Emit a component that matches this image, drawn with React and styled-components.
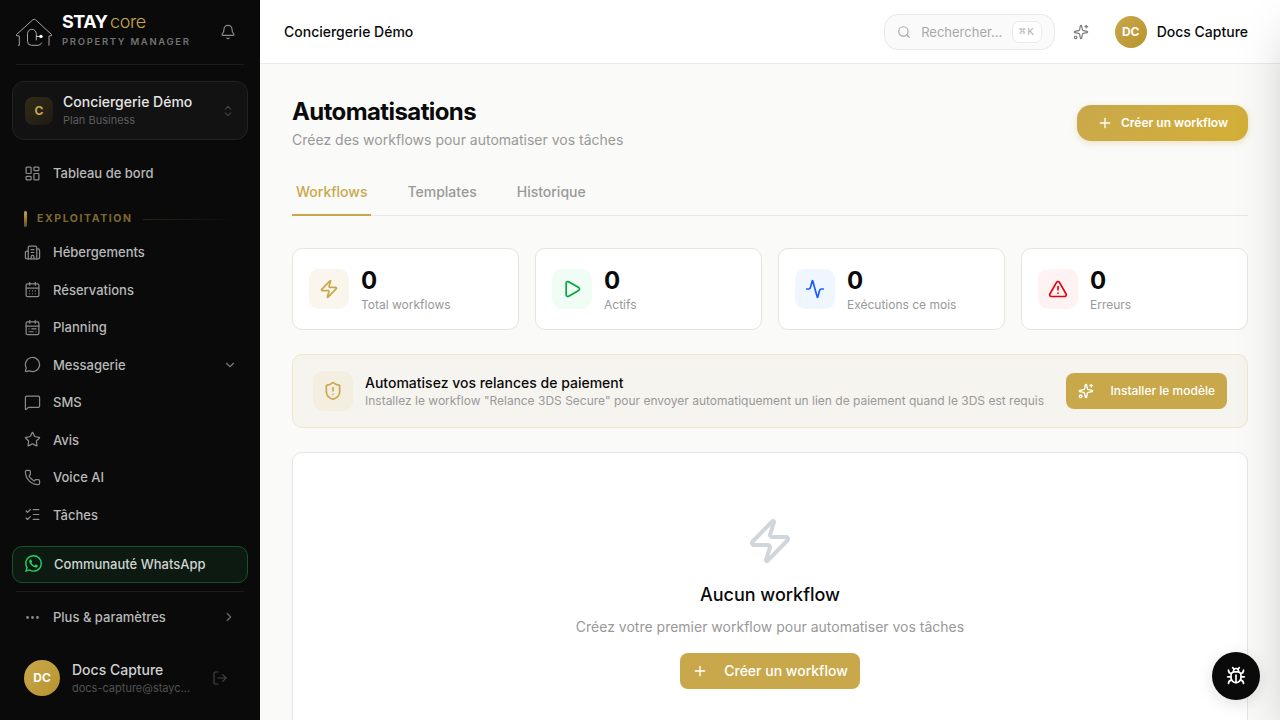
import React from 'react'
import { useState } from 'react'
import styled, { createGlobalStyle } from 'styled-components'
import {
  Activity,
  Bell,
  Bug,
  Building2,
  CalendarDays,
  CalendarRange,
  ChevronDown,
  ChevronRight,
  ChevronsUpDown,
  Ellipsis,
  LayoutDashboard,
  ListChecks,
  LogOut,
  MessageCircle,
  MessageSquare,
  Phone,
  Play,
  Plus,
  Search,
  ShieldAlert,
  Sparkles,
  Star,
  TriangleAlert,
  Zap,
} from 'lucide-react'
import { SiWhatsapp } from 'react-icons/si'

const navItems = [
  { label: 'Hébergements', icon: Building2 },
  { label: 'Réservations', icon: CalendarDays },
  { label: 'Planning', icon: CalendarRange },
  { label: 'Messagerie', icon: MessageCircle, open: true },
  { label: 'SMS', icon: MessageSquare },
  { label: 'Avis', icon: Star },
  { label: 'Voice AI', icon: Phone },
  { label: 'Tâches', icon: ListChecks },
]

const stats = [
  { label: 'Total workflows', value: 0, icon: Zap, color: '#c9a84c', bg: '#faf6ed' },
  { label: 'Actifs', value: 0, icon: Play, color: '#00a63e', bg: '#f0fdf4' },
  { label: 'Exécutions ce mois', value: 0, icon: Activity, color: '#155dfc', bg: '#eff6ff' },
  { label: 'Erreurs', value: 0, icon: TriangleAlert, color: '#e7000b', bg: '#fef2f2' },
]

const tabs = ['Workflows', 'Templates', 'Historique']

function Logo() {
  return (
    <svg width="36" height="28" viewBox="0 0 36 28" fill="none" stroke="#a3a3a3" strokeWidth="1" strokeLinecap="round">
      <path d="M2.500 27.300H3.300V18L.5 17.700V16.500L16.800 1.800Q18.200 .7 19.600 1.800L35.500 16.500V17.700L33 18V27.300" />
      <path d="M20.300 22V15.700a4.400 4.400 0 0 0-8.800 0v7.600a4 4 0 0 0 4 4h6.500q2.700 0 3.500-2.300" />
      <path d="M20.500 18.400h4" stroke="#d4d4d4" />
      <circle cx="25" cy="18.400" r="1.700" fill="#fff" stroke="none" />
    </svg>
  )
}

function Sidebar() {
  return (
    <Side>
      <Brand>
        <Logo />
        <BrandText>
          <BrandName>STAY<span>core</span></BrandName>
          <BrandSub>PROPERTY MANAGER</BrandSub>
        </BrandText>
        <Bell size={16} strokeWidth={1.75} />
      </Brand>

      <Workspace>
        <WorkspaceIcon>C</WorkspaceIcon>
        <WorkspaceText>
          <WorkspaceName>Conciergerie Démo</WorkspaceName>
          <WorkspacePlan>Plan Business</WorkspacePlan>
        </WorkspaceText>
        <ChevronsUpDown size={14} strokeWidth={1.75} />
      </Workspace>

      <NavItem>
        <LayoutDashboard size={17} strokeWidth={1.75} />
        <span>Tableau de bord</span>
      </NavItem>

      <Section>EXPLOITATION</Section>

      <Nav>
        {navItems.map(({ label, icon: Icon, open }) => (
          <NavItem key={label}>
            <Icon size={17} strokeWidth={1.75} />
            <span>{label}</span>
            {open && <ChevronDown size={14} strokeWidth={2} color="#7a7a7a" />}
          </NavItem>
        ))}
      </Nav>

      <WhatsApp>
        <SiWhatsapp size={17} />
        Communauté WhatsApp
      </WhatsApp>
      <Divider />
      <NavItem>
        <Ellipsis size={17} strokeWidth={2} />
        <span>Plus &amp; paramètres</span>
        <MoreChevron size={14} strokeWidth={2} color="#6b6b6b" />
      </NavItem>

      <User>
        <Avatar $size={36}>DC</Avatar>
        <Grow>
          <UserName>Docs Capture</UserName>
          <UserMail>docs-capture@staycore.fr</UserMail>
        </Grow>
        <LogOut size={16} strokeWidth={1.75} />
      </User>
    </Side>
  )
}

function Topbar() {
  return (
    <Bar>
      <BarTitle>Conciergerie Démo</BarTitle>
      <SearchBox>
        <Search size={14} strokeWidth={2} />
        <span>Rechercher...</span>
        <Kbd>⌘K</Kbd>
      </SearchBox>
      <AiButton>
        <Sparkles size={16} strokeWidth={1.75} />
      </AiButton>
      <Avatar $size={32}>DC</Avatar>
      <BarUser>Docs Capture</BarUser>
    </Bar>
  )
}

function App() {
  const [activeTab, setActiveTab] = useState('Workflows')

  return (
    <Shell>
      <GlobalStyle />
      <Sidebar />
      <Page>
        <Topbar />
        <Content>
          <PageHead>
            <div>
              <Title>Automatisations</Title>
              <Subtitle>Créez des workflows pour automatiser vos tâches</Subtitle>
            </div>
            <CreateButton>
              <Plus size={16} />
              Créer un workflow
            </CreateButton>
          </PageHead>

          <Tabs>
            {tabs.map((tab) => (
              <Tab key={tab} className={activeTab === tab ? 'active' : ''} onClick={() => setActiveTab(tab)}>
                {tab}
              </Tab>
            ))}
          </Tabs>

          <Stats>
            {stats.map(({ label, value, icon: Icon, color, bg }) => (
              <Stat key={label}>
                <IconTile $color={color} $bg={bg}>
                  <Icon size={20} />
                </IconTile>
                <div>
                  <StatValue>{value}</StatValue>
                  <StatLabel>{label}</StatLabel>
                </div>
              </Stat>
            ))}
          </Stats>

          <Banner>
            <IconTile $color="#c9a84c" $bg="#f4eee0">
              <ShieldAlert size={20} />
            </IconTile>
            <Grow>
              <BannerTitle>Automatisez vos relances de paiement</BannerTitle>
              <BannerText>
                Installez le workflow "Relance 3DS Secure" pour envoyer automatiquement un lien de paiement quand le 3DS est requis
              </BannerText>
            </Grow>
            <GoldButton $small>
              <Sparkles size={16} />
              Installer le modèle
            </GoldButton>
          </Banner>

          <Empty>
            <Zap size={48} color="#d1d5dc" />
            <EmptyTitle>Aucun workflow</EmptyTitle>
            <EmptyText>Créez votre premier workflow pour automatiser vos tâches</EmptyText>
            <GoldButton>
              <Plus size={16} />
              Créer un workflow
            </GoldButton>
          </Empty>
        </Content>
      </Page>
      <Drawer />
      <BugButton>
        <Bug size={20} />
      </BugButton>
    </Shell>
  )
}

const GlobalStyle = createGlobalStyle`
  * {
    box-sizing: border-box;
    margin: 0;
  }
  body {
    overflow: hidden;
    background: #fafaf8;
    color: #0a0a0a;
    font-family: Inter, "Liberation Sans", sans-serif;
    font-size: 14px;
    line-height: 20px;
    -webkit-font-smoothing: antialiased;
  }
  button {
    font-family: inherit;
    line-height: 20px;
    border: none;
    background: none;
    padding: 0;
  }
  svg {
    flex-shrink: 0;
  }
`

const Shell = styled.div`
  display: flex;
  height: 100vh;
  overflow: hidden;
`

const Grow = styled.div`
  flex: 1;
  min-width: 0;
`

const Side = styled.aside`
  width: 260px;
  flex-shrink: 0;
  display: flex;
  flex-direction: column;
  padding: 0 12px;
  background: #0a0a0a;
`

const Brand = styled.div`
  display: flex;
  align-items: center;
  height: 65px;
  margin: 0 4px 16px;
  padding-right: 8px;
  border-bottom: 1px solid #1c1c1c;
  color: #8a8a8a;
`

const BrandText = styled.div`
  flex: 1;
  margin: -4px 0 0 10px;
`

const BrandName = styled.div`
  font-size: 18px;
  line-height: 22px;
  font-weight: 700;
  letter-spacing: -0.025em;
  color: white;
  span {
    margin-left: 2.5px;
    font-weight: 300;
    color: #c9a84c;
  }
`

const BrandSub = styled.div`
  margin-top: 2px;
  font-size: 9.5px;
  line-height: 14px;
  font-weight: 600;
  letter-spacing: 0.177em;
  color: #737373;
`

const Workspace = styled.div`
  display: flex;
  align-items: center;
  gap: 10px;
  height: 59px;
  flex-shrink: 0;
  margin-bottom: 14.5px;
  padding: 0 12px;
  border: 1px solid #222;
  border-radius: 12px;
  background: #121212;
  color: #454545;
`

const WorkspaceIcon = styled.div`
  display: grid;
  place-items: center;
  width: 28px;
  height: 28px;
  border-radius: 8px;
  background: linear-gradient(135deg, #342c18, #1d1a12);
  color: #c9a84c;
  font-size: 12px;
  font-weight: 700;
`

const WorkspaceText = styled(Grow)`
  padding-bottom: 2px;
`

const WorkspaceName = styled.div`
  font-size: 14px;
  line-height: 20px;
  font-weight: 500;
  color: #e5e5e5;
`

const WorkspacePlan = styled.div`
  font-size: 11px;
  line-height: 16px;
  color: #5c5c5c;
`

const Nav = styled.nav`
  display: flex;
  flex-direction: column;
`

const NavItem = styled.div`
  display: flex;
  align-items: center;
  gap: 12px;
  height: 37.5px;
  flex-shrink: 0;
  padding: 0 11px 0 12px;
  color: #8a8a8a;
  span {
    flex: 1;
    font-size: 13px;
    font-weight: 500;
    color: #b8b8b8;
  }
`

const MoreChevron = styled(ChevronRight)`
  margin-right: 1px;
`

const Section = styled.div`
  display: flex;
  align-items: center;
  gap: 10px;
  height: 16px;
  margin: 19px 12px 6.6px;
  font-size: 10.5px;
  font-weight: 700;
  letter-spacing: 0.15em;
  color: #7d6930;
  &::before {
    content: '';
    width: 3px;
    height: 16px;
    border-radius: 2px;
    background: linear-gradient(#c9a84c, #5f5024);
  }
  &::after {
    content: '';
    flex: 1;
    height: 1px;
    background: linear-gradient(90deg, #2c2614, transparent);
  }
`

const WhatsApp = styled.div`
  display: flex;
  align-items: center;
  gap: 12px;
  height: 37px;
  flex-shrink: 0;
  margin-top: 12.4px;
  padding: 0 12px 1px;
  border: 1px solid #13542a;
  border-radius: 10px;
  background: #0c1a11;
  font-size: 13px;
  font-weight: 500;
  color: #d0d4d1;
  svg {
    color: #25d366;
  }
`

const Divider = styled.div`
  height: 1px;
  flex-shrink: 0;
  margin: 8px 4px 6.5px;
  background: #1c1c1c;
`

const User = styled.div`
  display: flex;
  align-items: center;
  gap: 12px;
  margin-top: 24px;
  padding: 0 20px 0 12px;
  color: #444;
`

const UserName = styled.div`
  line-height: 20px;
  font-weight: 500;
  color: #d0d0d0;
`

const UserMail = styled.div`
  width: 120px;
  overflow: hidden;
  font-size: 11px;
  line-height: 16px;
  text-overflow: ellipsis;
  white-space: nowrap;
  color: #525252;
`

const Avatar = styled.div`
  display: grid;
  place-items: center;
  width: ${(p) => p.$size}px;
  height: ${(p) => p.$size}px;
  flex-shrink: 0;
  border-radius: 50%;
  background: linear-gradient(135deg, #c9a84c, #b8922e);
  color: white;
  font-size: 12px;
  font-weight: 700;
`

const Page = styled.div`
  flex: 1;
  min-width: 0;
  display: flex;
  flex-direction: column;
`

const Bar = styled.header`
  display: flex;
  align-items: center;
  height: 64px;
  flex-shrink: 0;
  padding: 0 32px 0 24px;
  border-bottom: 1px solid #ebebeb;
  background: white;
`

const BarTitle = styled.div`
  flex: 1;
  font-weight: 500;
`

const SearchBox = styled.div`
  display: flex;
  align-items: center;
  width: 171px;
  height: 36px;
  padding: 0 12px;
  border: 1px solid #e8e8e8;
  border-radius: 14px;
  background: #fafafa;
  color: #a8a8a8;
  span {
    flex: 1;
    margin-left: 10.5px;
    font-size: 13px;
  }
`

const Kbd = styled.kbd`
  display: grid;
  place-items: center;
  width: 30px;
  height: 22px;
  padding-left: 1px;
  border: 1px solid #ebebeb;
  border-radius: 7px;
  background: white;
  font-family: "Liberation Mono", "DejaVu Sans Mono", monospace;
  font-size: 11px;
  letter-spacing: 1.5px;
  color: #b0b0b0;
`

const AiButton = styled.button`
  display: grid;
  place-items: center;
  width: 36px;
  height: 36px;
  margin: 0 16px 0 8px;
  color: #7a7a7a;
`

const BarUser = styled.div`
  margin-left: 10px;
  font-weight: 500;
`

const Content = styled.main`
  flex: 1;
  padding: 32px 32px 0;
`

const PageHead = styled.div`
  display: flex;
  align-items: center;
  justify-content: space-between;
`

const Title = styled.h1`
  font-size: 24px;
  line-height: 32px;
  font-weight: 700;
  letter-spacing: -0.025em;
`

const Subtitle = styled.p`
  margin-top: 2px;
  color: #999;
`

const CreateButton = styled.button`
  display: flex;
  align-items: center;
  gap: 8px;
  height: 36px;
  padding: 0 20px;
  border-radius: 14px;
  background: linear-gradient(135deg, #c9a84c, #d4af37);
  box-shadow: 0 2px 6px rgba(201, 168, 76, 0.3);
  color: white;
  font-size: 12px;
  line-height: 16px;
  font-weight: 600;
`

const Tabs = styled.div`
  display: flex;
  gap: 32px;
  height: 42px;
  margin-top: 24px;
  border-bottom: 1px solid #e8e8e6;
`

const Tab = styled.button`
  height: 42px;
  padding: 8px 4px 12px;
  border-bottom: 2px solid transparent;
  font-size: 14px;
  line-height: 20px;
  font-weight: 500;
  color: #999;
  &.active {
    border-color: #c9a84c;
    color: #c9a84c;
  }
`

const Stats = styled.div`
  display: grid;
  grid-template-columns: repeat(4, 1fr);
  gap: 16px;
  margin-top: 32px;
`

const Stat = styled.div`
  display: flex;
  align-items: center;
  gap: 12px;
  padding: 16px;
  border: 1px solid #e5e5e0;
  border-radius: 10px;
  background: white;
`

const IconTile = styled.div`
  display: grid;
  place-items: center;
  width: 40px;
  height: 40px;
  flex-shrink: 0;
  border-radius: 10px;
  background: ${(p) => p.$bg};
  color: ${(p) => p.$color};
`

const StatValue = styled.div`
  font-size: 24px;
  line-height: 32px;
  font-weight: 700;
`

const StatLabel = styled.div`
  font-size: 12px;
  line-height: 16px;
  color: #999;
`

const Banner = styled.div`
  display: flex;
  align-items: center;
  gap: 12px;
  margin-top: 24px;
  padding: 16px 20px;
  border: 1px solid #efe6cd;
  border-radius: 10px;
  background: #f6f4ef;
`

const BannerTitle = styled.div`
  font-weight: 500;
`

const BannerText = styled.div`
  font-size: 12px;
  line-height: 16px;
  white-space: nowrap;
  color: #999;
`

const GoldButton = styled.button`
  display: flex;
  align-items: center;
  gap: 16px;
  height: 36px;
  padding: 0 12px;
  border-radius: 8px;
  background: #c9a84c;
  color: white;
  font-size: ${(p) => (p.$small ? '12px' : '14px')};
  line-height: ${(p) => (p.$small ? '16px' : '20px')};
  font-weight: 500;
`

const Empty = styled.div`
  display: flex;
  flex-direction: column;
  align-items: center;
  height: 302px;
  margin-top: 24px;
  padding-top: 64px;
  border: 1px solid #e5e5e5;
  border-radius: 10px;
  background: white;
`

const EmptyTitle = styled.h3`
  margin-top: 16px;
  font-size: 18px;
  line-height: 28px;
  font-weight: 500;
`

const EmptyText = styled.p`
  margin: 8px 0 16px;
  color: #999;
`

/* closed panel, parked past the right edge, only its shadow shows */
const Drawer = styled.div`
  position: fixed;
  top: 0;
  left: 100%;
  width: 400px;
  height: 100vh;
  box-shadow: 0 25px 50px -12px rgba(0, 0, 0, 0.25);
`

const BugButton = styled.button`
  position: fixed;
  right: 20px;
  bottom: 20px;
  display: grid;
  place-items: center;
  width: 48px;
  height: 48px;
  border-radius: 50%;
  background: #0a0a0a;
  box-shadow: 0 4px 16px rgba(0, 0, 0, 0.12);
  color: white;
`

export default App
